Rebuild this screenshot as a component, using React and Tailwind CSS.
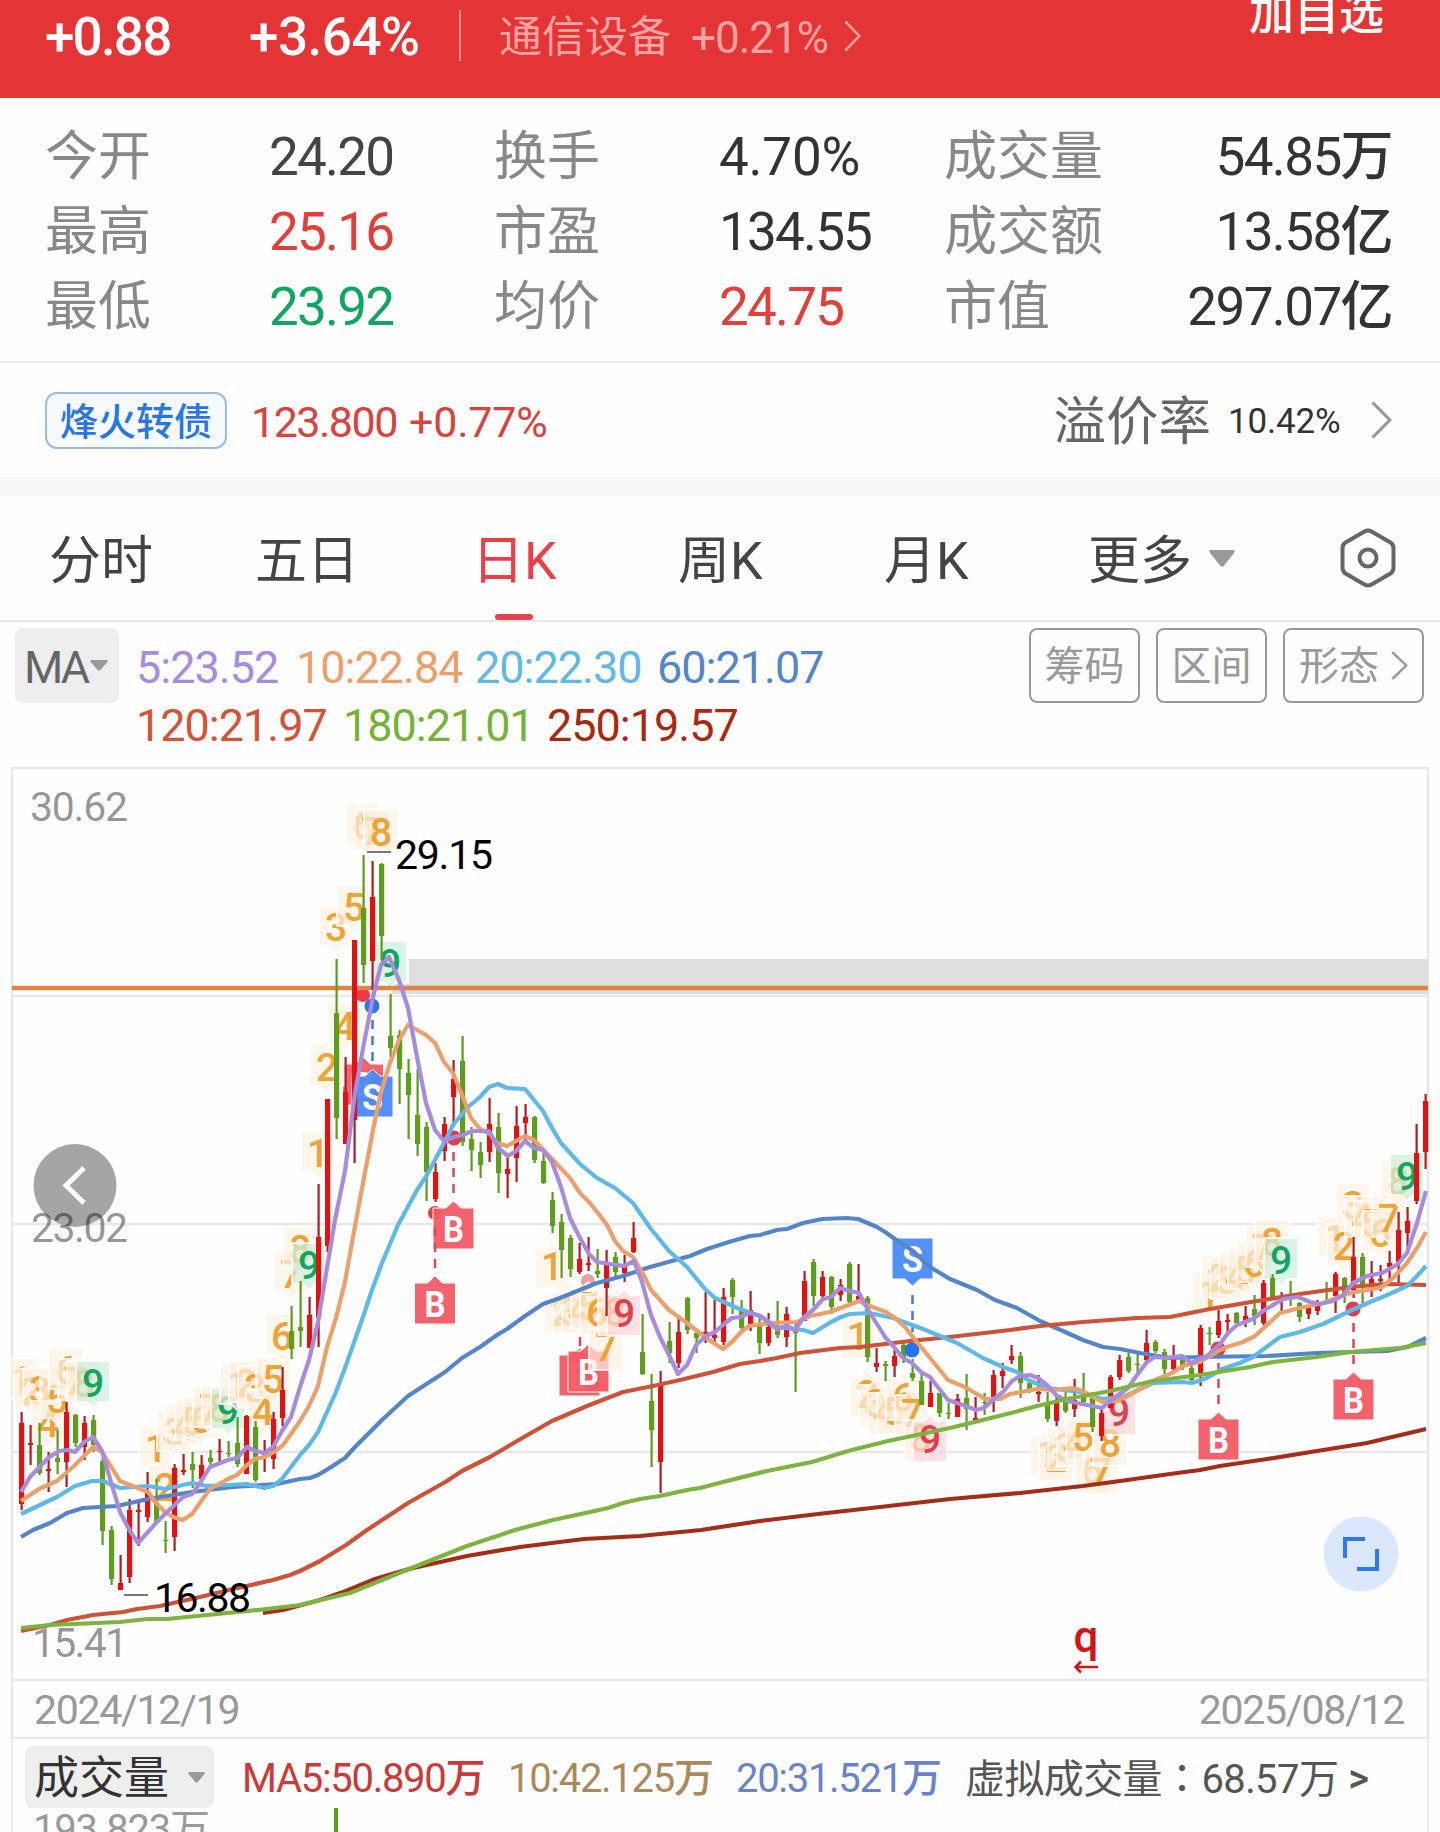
const STATS = [
  ["今开", "24.20", "text-[#444444]", "换手", "4.70%", "tracking-[-0.2px] text-[#333333]", "成交量", "54.85万"],
  ["最高", "25.16", "text-[#e0403c]", "市盈", "134.55", "tracking-[-1.8px] text-[#333333]", "成交额", "13.58亿"],
  ["最低", "23.92", "text-[#12a562]", "均价", "24.75", "tracking-[-1.8px] text-[#e0403c]", "市值", "297.07亿"],
];

// [high, body top, body bottom, low, up]
const CANDLES = [
  [1412, 1423, 1504, 1510, 1], [1425, 1443, 1445, 1465, 1], [1423, 1445, 1473, 1475, 0], [1452, 1469, 1471, 1492, 1],
  [1430, 1458, 1462, 1474, 0], [1402, 1412, 1462, 1487, 1], [1414, 1415, 1443, 1447, 0], [1416, 1423, 1447, 1460, 1],
  [1415, 1420, 1445, 1452, 0], [1458, 1461, 1531, 1545, 0], [1526, 1530, 1579, 1585, 0], [1555, 1583, 1590, 1590, 1],
  [1499, 1510, 1577, 1583, 1], [1503, 1510, 1512, 1546, 1], [1472, 1491, 1517, 1522, 1], [1479, 1503, 1521, 1523, 0],
  [1521, 1540, 1541, 1553, 0], [1464, 1468, 1537, 1551, 1], [1454, 1470, 1472, 1475, 1], [1452, 1464, 1470, 1488, 0],
  [1455, 1465, 1479, 1481, 1], [1450, 1458, 1462, 1465, 0], [1439, 1451, 1452, 1462, 1], [1441, 1453, 1454, 1457, 0],
  [1417, 1443, 1464, 1467, 0], [1415, 1416, 1474, 1474, 1], [1421, 1427, 1480, 1482, 0], [1440, 1453, 1455, 1472, 1],
  [1412, 1419, 1459, 1469, 1], [1367, 1390, 1418, 1426, 1], [1306, 1331, 1349, 1359, 0], [1281, 1327, 1331, 1347, 0],
  [1297, 1315, 1348, 1348, 1], [1184, 1237, 1318, 1347, 1], [1099, 1099, 1246, 1252, 1], [959, 1013, 1118, 1139, 0],
  [1057, 1092, 1144, 1144, 1], [940, 940, 1120, 1163, 1], [855, 908, 965, 983, 0], [861, 897, 961, 990, 1],
  [863, 864, 936, 960, 0], [994, 1036, 1048, 1057, 0], [1030, 1035, 1069, 1104, 0], [1059, 1073, 1095, 1139, 0],
  [1069, 1115, 1144, 1156, 0], [1122, 1127, 1172, 1201, 0], [1163, 1172, 1199, 1202, 1], [1117, 1124, 1151, 1161, 1],
  [1060, 1079, 1097, 1127, 1], [1036, 1061, 1142, 1146, 0], [1127, 1139, 1150, 1171, 0], [1142, 1152, 1165, 1178, 0],
  [1098, 1124, 1152, 1162, 1], [1113, 1127, 1173, 1193, 0], [1155, 1169, 1174, 1198, 1], [1106, 1126, 1158, 1182, 1],
  [1104, 1117, 1123, 1140, 1], [1116, 1117, 1160, 1163, 0], [1150, 1161, 1183, 1184, 0], [1192, 1200, 1226, 1233, 0],
  [1214, 1222, 1250, 1278, 0], [1235, 1238, 1269, 1277, 0], [1243, 1259, 1272, 1274, 1], [1237, 1263, 1265, 1271, 1],
  [1249, 1271, 1274, 1278, 0], [1250, 1262, 1288, 1316, 1], [1252, 1257, 1272, 1276, 0], [1255, 1264, 1273, 1282, 1],
  [1222, 1238, 1252, 1253, 1], [1314, 1352, 1374, 1375, 0], [1374, 1401, 1430, 1467, 0], [1371, 1383, 1462, 1493, 1],
  [1322, 1341, 1353, 1363, 0], [1316, 1332, 1363, 1368, 1], [1297, 1298, 1330, 1334, 0], [1331, 1333, 1338, 1353, 0],
  [1292, 1332, 1334, 1343, 1], [1300, 1335, 1338, 1342, 1], [1288, 1297, 1342, 1345, 1], [1278, 1280, 1297, 1314, 0],
  [1300, 1309, 1328, 1333, 0], [1291, 1310, 1325, 1331, 1], [1317, 1324, 1343, 1354, 0], [1313, 1327, 1343, 1346, 1],
  [1301, 1328, 1335, 1338, 0], [1307, 1314, 1337, 1347, 1], [1323, 1328, 1333, 1392, 0], [1271, 1281, 1321, 1321, 1],
  [1259, 1262, 1296, 1306, 0], [1271, 1277, 1296, 1301, 1], [1276, 1277, 1307, 1314, 0], [1279, 1285, 1295, 1301, 1],
  [1262, 1264, 1302, 1307, 0], [1264, 1296, 1300, 1300, 1], [1296, 1298, 1357, 1362, 0], [1348, 1363, 1367, 1372, 1],
  [1361, 1364, 1366, 1381, 0], [1350, 1356, 1366, 1377, 1], [1343, 1345, 1359, 1363, 0], [1359, 1373, 1378, 1381, 0],
  [1374, 1381, 1405, 1405, 0], [1381, 1393, 1407, 1407, 1], [1393, 1393, 1413, 1417, 0], [1403, 1413, 1414, 1419, 0],
  [1394, 1399, 1417, 1417, 1], [1374, 1398, 1409, 1430, 0], [1397, 1418, 1420, 1422, 1], [1393, 1402, 1403, 1415, 0],
  [1370, 1375, 1398, 1412, 1], [1363, 1371, 1376, 1388, 1], [1345, 1356, 1360, 1364, 1], [1352, 1356, 1383, 1398, 0],
  [1380, 1383, 1389, 1393, 0], [1375, 1392, 1394, 1402, 1], [1392, 1402, 1419, 1422, 0], [1397, 1403, 1421, 1426, 1],
  [1390, 1397, 1411, 1413, 0], [1379, 1400, 1409, 1417, 1], [1373, 1397, 1402, 1403, 0], [1392, 1398, 1427, 1432, 0],
  [1408, 1413, 1436, 1441, 1], [1375, 1377, 1408, 1408, 1], [1355, 1360, 1377, 1380, 1], [1353, 1357, 1371, 1373, 0],
  [1354, 1364, 1365, 1373, 0], [1330, 1343, 1360, 1364, 1], [1340, 1342, 1351, 1353, 0], [1349, 1352, 1369, 1374, 0],
  [1345, 1358, 1369, 1373, 1], [1358, 1360, 1365, 1370, 0], [1363, 1368, 1380, 1384, 0], [1325, 1328, 1373, 1386, 1],
  [1327, 1333, 1334, 1345, 0], [1310, 1321, 1335, 1338, 1], [1314, 1320, 1322, 1333, 1], [1312, 1313, 1323, 1325, 0],
  [1306, 1316, 1322, 1327, 1], [1295, 1309, 1316, 1325, 0], [1280, 1283, 1323, 1325, 1], [1274, 1278, 1297, 1300, 0],
  [1292, 1297, 1299, 1311, 1], [1281, 1297, 1298, 1306, 0], [1302, 1303, 1317, 1322, 0], [1307, 1308, 1314, 1319, 1],
  [1300, 1306, 1311, 1315, 1], [1282, 1291, 1292, 1302, 0], [1272, 1274, 1296, 1313, 1], [1277, 1278, 1293, 1303, 0],
  [1237, 1257, 1290, 1298, 1], [1253, 1257, 1285, 1303, 0], [1261, 1279, 1285, 1297, 1], [1265, 1279, 1281, 1291, 1],
  [1251, 1263, 1267, 1280, 1], [1212, 1230, 1262, 1284, 1], [1207, 1221, 1233, 1254, 1], [1124, 1153, 1201, 1204, 1],
  [1094, 1101, 1152, 1169, 1],
];

const LINES = [
  { color: "#5585c9", points: "21,1537 33,1530 50,1523 67,1513 83,1508 117,1506 148,1499 192,1492 233,1487 277,1484 300,1479 310,1478 318,1475 328,1469 345,1458 355,1447 382,1420 408,1396 445,1372 462,1358 480,1347 497,1335 507,1329 525,1316 543,1304 560,1298 597,1283 623,1276 650,1267 690,1256 707,1249 732,1241 750,1236 760,1235 777,1230 787,1229 803,1223 822,1219 847,1218 858,1219 877,1227 885,1232 895,1239 913,1251 930,1267 950,1279 977,1290 995,1300 1017,1308 1040,1321 1063,1331 1083,1340 1103,1347 1120,1349 1140,1353 1170,1358 1200,1357 1267,1356 1317,1353 1387,1351 1408,1347 1426,1338" },
  { color: "#cc523a", points: "21,1631 50,1625 67,1620 93,1615 123,1612 137,1609 160,1606 200,1597 233,1589 273,1580 290,1575 300,1571 320,1561 346,1545 367,1530 408,1503 447,1481 462,1471 490,1457 507,1447 517,1441 552,1421 587,1406 623,1392 653,1386 680,1380 713,1372 740,1364 760,1361 777,1358 800,1353 840,1348 860,1347 910,1341 950,1337 1010,1330 1040,1326 1083,1322 1137,1318 1170,1317 1210,1309 1257,1301 1300,1294 1350,1287 1387,1284 1426,1285" },
  { color: "#5fb8e6", points: "21,1514 57,1497 75,1486 92,1481 103,1481 120,1488 148,1486 165,1489 192,1483 207,1486 247,1484 264,1488 273,1486 282,1479 300,1455 309,1445 318,1432 336,1392 345,1368 363,1317 372,1290 382,1263 398,1225 417,1190 427,1175 444,1143 453,1125 467,1108 480,1097 489,1087 498,1084 507,1088 525,1089 543,1111 552,1128 561,1143 580,1164 597,1178 615,1188 633,1203 651,1229 669,1251 687,1267 705,1289 715,1298 737,1308 760,1316 777,1327 803,1330 813,1333 831,1322 841,1317 850,1314 870,1313 893,1318 923,1329 957,1343 983,1358 1003,1367 1017,1372 1028,1380 1047,1388 1080,1392 1102,1399 1123,1397 1153,1383 1183,1382 1192,1383 1207,1378 1222,1369 1240,1363 1253,1357 1280,1337 1300,1332 1323,1324 1350,1311 1370,1302 1385,1296 1407,1286 1417,1276 1426,1266" },
  { color: "#eba06c", points: "21,1501 39,1489 57,1481 75,1465 93,1447 102,1452 120,1481 135,1487 148,1492 156,1503 165,1512 173,1517 183,1520 192,1514 210,1489 228,1479 237,1475 247,1465 255,1459 265,1457 274,1452 283,1445 291,1434 300,1421 309,1406 318,1386 327,1347 336,1318 345,1282 353,1237 363,1183 373,1130 381,1092 390,1063 399,1040 408,1025 426,1035 435,1043 444,1062 453,1073 462,1095 471,1118 480,1129 490,1134 497,1143 507,1146 525,1136 534,1140 552,1159 570,1178 580,1193 589,1202 598,1213 607,1225 615,1241 623,1251 633,1257 642,1272 651,1290 669,1310 687,1323 705,1337 715,1344 723,1349 732,1342 741,1332 749,1326 770,1323 797,1322 810,1316 830,1312 859,1301 867,1305 886,1312 895,1318 905,1327 917,1342 948,1380 967,1388 985,1399 1000,1399 1010,1394 1037,1389 1053,1390 1073,1388 1083,1391 1093,1397 1102,1402 1117,1401 1137,1391 1155,1380 1172,1373 1183,1366 1200,1362 1220,1350 1227,1347 1243,1342 1255,1336 1280,1313 1300,1308 1323,1303 1350,1293 1373,1289 1382,1287 1393,1278 1407,1263 1417,1248 1426,1232" },
  { color: "#a78bdc", points: "21,1492 30,1477 48,1458 59,1451 67,1450 75,1452 84,1442 93,1437 102,1451 111,1482 120,1512 130,1531 138,1543 147,1533 156,1523 166,1513 183,1497 192,1494 200,1483 210,1467 228,1460 237,1458 247,1447 255,1451 265,1453 273,1447 282,1431 291,1417 300,1387 309,1360 318,1322 327,1268 335,1220 345,1171 355,1093 364,1043 373,997 381,965 389,957 399,980 408,1008 417,1057 426,1103 435,1130 444,1141 454,1137 463,1135 472,1131 489,1131 498,1148 508,1156 516,1151 525,1141 534,1148 543,1150 552,1162 561,1187 570,1218 580,1238 589,1254 597,1262 624,1266 634,1261 642,1282 651,1315 660,1337 669,1355 678,1374 687,1365 696,1345 706,1336 715,1332 724,1324 732,1318 741,1317 749,1313 760,1316 768,1322 777,1329 787,1326 795,1330 804,1317 813,1310 823,1299 831,1297 840,1288 850,1291 859,1293 867,1308 885,1337 894,1347 903,1358 912,1363 921,1372 930,1377 948,1400 966,1406 976,1410 984,1408 994,1399 1003,1392 1012,1381 1020,1376 1030,1375 1038,1378 1047,1385 1057,1396 1067,1401 1102,1408 1110,1401 1128,1388 1137,1375 1147,1362 1155,1357 1165,1358 1182,1356 1191,1363 1207,1356 1220,1344 1228,1333 1237,1325 1253,1319 1263,1311 1283,1299 1298,1297 1310,1302 1320,1304 1333,1301 1343,1295 1353,1283 1367,1276 1382,1273 1398,1264 1407,1253 1417,1223 1426,1191" },
  { color: "#a42d18", points: "263,1613 283,1610 320,1600 346,1591 375,1579 409,1569 467,1556 520,1547 584,1539 640,1536 701,1530 760,1521 818,1514 880,1507 950,1499 1020,1493 1083,1486 1120,1481 1170,1474 1200,1470 1220,1466 1267,1459 1317,1451 1367,1443 1426,1429" },
  { color: "#7db340", points: "21,1628 50,1625 120,1622 147,1619 167,1619 207,1615 267,1609 300,1605 350,1593 409,1569 467,1546 515,1530 553,1520 590,1512 608,1508 623,1503 640,1499 660,1496 687,1490 700,1488 723,1482 767,1471 812,1462 848,1451 888,1441 950,1428 1007,1414 1037,1406 1067,1399 1110,1391 1153,1381 1200,1375 1250,1367 1273,1362 1317,1357 1350,1352 1400,1348 1426,1343" },
];

// nine-turn marks: [x, y, digit, tone]
const UP_MARKS = [
  [21, 1380, 1], [31, 1391, 2], [40, 1390, 3], [48, 1423, 4], [57, 1399, 5], [66, 1370, 6], [75, 1381, 7], [84, 1383, 8], [93, 1383, 9, "green"],
  [156, 1448, 1], [165, 1487, 2], [174, 1432, 3], [183, 1426, 4], [192, 1421, 5], [201, 1419, 6], [210, 1408, 7], [219, 1408, 8], [228, 1410, 9, "green"],
  [237, 1385, 1], [246, 1383, 2], [255, 1388, 3], [263, 1411, 4], [273, 1379, 5], [282, 1336, 6], [291, 1274, 7], [300, 1249, 8], [309, 1265, 9, "green"],
  [318, 1153, 1], [327, 1067, 2], [336, 927, 3], [345, 1026, 4], [354, 907, 5], [363, 825, 6], [372, 831, 7], [381, 832, 8], [390, 963, 9, "green"],
  [1209, 1294, 1], [1218, 1278, 2], [1227, 1280, 3], [1236, 1276, 4], [1245, 1270, 5], [1254, 1263, 6], [1263, 1248, 7], [1272, 1242, 8], [1281, 1260, 9, "green"],
  [1335, 1238, 1], [1344, 1246, 2], [1353, 1205, 3], [1362, 1218, 4], [1371, 1223, 5], [1380, 1233, 6], [1389, 1218, 7], [1398, 1181, 8], [1407, 1176, 9, "green"],
];

const DOWN_MARKS = [
  [552, 1266, 1], [561, 1312, 2], [570, 1311, 3], [579, 1310, 4], [588, 1306, 5], [597, 1312, 6], [606, 1347, 7], [615, 1312, 8], [624, 1313, 9, "pink"],
  [858, 1336, 1], [867, 1394, 2], [876, 1403, 3], [885, 1411, 4], [894, 1411, 5], [903, 1397, 6], [912, 1413, 7], [921, 1438, 8], [930, 1439, 9, "pink"],
  [1047, 1454, 1], [1056, 1458, 2], [1065, 1447, 3], [1074, 1443, 4], [1083, 1437, 5], [1092, 1470, 6], [1101, 1472, 7], [1110, 1443, 8], [1119, 1412, 9, "pink"],
];

const TONES = {
  orange: { fill: "#fef1e3", text: "#eda338" },
  green: { fill: "#cdeedd", text: "#12a562" },
  pink: { fill: "#fcd5da", text: "#df3f4c" },
};

function Mark({ x, y, digit, tone = "orange", down = false }) {
  const t = TONES[tone];
  const shape = down
    ? `M${x - 17},${y - 18} h11 l6,-6 l6,6 h11 v41 h-34 z`
    : `M${x - 17},${y - 22} h34 v41 h-11 l-6,6 l-6,-6 h-11 z`;
  return (
    <g>
      <path d={shape} fill={t.fill} fillOpacity="0.7" stroke="#fff" strokeWidth="1.5" />
      <text x={x} y={y + 13.5} textAnchor="middle" fontSize="39" fontWeight="500" fill={t.text}>
        {digit}
      </text>
    </g>
  );
}

// y is the top edge of the square
function TradeTag({ x, y, side, down = false, opacity = 0.95 }) {
  const fill = side === "B" ? "#f35b67" : "#4a8cf8";
  const shape = down
    ? `M${x - 20.5},${y} h41 v41 h-13 l-7.5,7 l-7.5,-7 h-13 z`
    : `M${x - 20.5},${y} h13 l7.5,-7 l7.5,7 h13 v41 h-41 z`;
  return (
    <g opacity={opacity}>
      <path d={shape} fill={fill} stroke="#fff" strokeWidth="1" />
      <text x={x} y={y + 33.5} textAnchor="middle" fontSize="37" fontWeight="700" textLength="21" lengthAdjust="spacingAndGlyphs" fill="#fff">
        {side}
      </text>
    </g>
  );
}

function Lead({ x, from, to, color }) {
  return <line x1={x} x2={x} y1={from} y2={to} stroke={color} strokeWidth="2.5" strokeDasharray="9 7" />;
}

function Chart() {
  return (
    <svg width="1440" height="973" viewBox="0 766 1440 973" className="block" fontFamily="Roboto">
      <clipPath id="plot">
        <rect x="11" y="766" width="1418" height="973" />
      </clipPath>
      <g stroke="#e8e8e8" strokeWidth="2.5" fill="none">
        <path d="M12,1739 V768 H1428 V1739" />
        <path d="M12,996 H1428 M12,1224 H1428 M12,1452 H1428 M12,1680 H1428 M12,1738 H1428" />
      </g>
      <path d="M409,959 H1428 V994 H392 V984 H409 Z" fill="#dedede" />

      <circle cx="75" cy="1185.500" r="41.5" fill="#a5a5a5" />
      <path d="M84,1168 L66,1185.500 L84,1203" fill="none" stroke="#fff" strokeWidth="5" />

      <g fill="#000" fillOpacity="0.42" fontSize="41" fontWeight="450">
        <text x="30" y="821" textLength="98">30.62</text>
        <text x="31" y="1242" textLength="97">23.02</text>
        <text x="32" y="1656.500" textLength="96">15.41</text>
      </g>

      <circle cx="363" cy="995" r="7" fill="#ee3a44" />
      <TradeTag x={363} y={1064} side="B" />
      <Lead x={580} from={1337} to={1352} color="#d9485c" />
      <TradeTag x={579.5} y={1355} side="B" />
      <TradeTag x={588.5} y={1351} side="B" />
      <circle cx="588" cy="1281" r="7" fill="#e8a0a0" />

      <g clipPath="url(#plot)">
        {UP_MARKS.map(([x, y, digit, tone]) => (
          <Mark key={x} x={x} y={y} digit={digit} tone={tone} />
        ))}
        {DOWN_MARKS.map(([x, y, digit, tone]) => (
          <Mark key={x} x={x} y={y} digit={digit} tone={tone} down />
        ))}
      </g>

      <line x1="12" x2="1428" y1="988" y2="988" stroke="#dd8546" strokeWidth="4.500" />

      <circle cx="435" cy="1213" r="7" fill="#d9404c" />
      <TradeTag x={435} y={1283} side="B" />
      <TradeTag x={453.5} y={1208} side="B" />
      <Lead x={435} from={1227} to={1272} color="#d9485c" />
      <TradeTag x={372.5} y={1076} side="S" />
      <TradeTag x={912.5} y={1238} side="S" down />
      <TradeTag x={1218.5} y={1419} side="B" />
      <TradeTag x={1353.5} y={1379} side="B" />

      {CANDLES.map(([high, top, bottom, low, up], i) => {
        const x = 21.5 + i * 9;
        return (
          <g key={x}>
            <rect x={x - 1} y={high} width="2.200" height={low - high} fill={up ? "#ab1f23" : "#5d9a20"} />
            <rect x={x - 2.5} y={top} width="5.200" height={bottom - top} fill={up ? "#e01212" : "#5f9d1e"} />
          </g>
        );
      })}

      <Lead x={372.5} from={1020} to={1066} color="#3f7bdc" />
      <circle cx="372" cy="1006" r="7.500" fill="#2a73ee" />
      <Lead x={453.5} from={1152} to={1197} color="#d9485c" />
      <circle cx="454" cy="1138" r="7.500" fill="#df3d4d" />
      <Lead x={912.5} from={1295} to={1332} color="#3f7bdc" />
      <circle cx="912" cy="1350" r="7.500" fill="#2a73ee" />
      <Lead x={1218.5} from={1363} to={1408} color="#d9485c" />
      <circle cx="1218" cy="1349" r="7.500" fill="#df3d4d" />
      <Lead x={1353.5} from={1323} to={1368} color="#d9485c" />
      <circle cx="1353" cy="1309" r="7.500" fill="#df3d4d" />

      {LINES.map((line) => (
        <polyline key={line.color} points={line.points} fill="none" stroke={line.color} strokeWidth="4.2" strokeLinejoin="round" />
      ))}

      <g stroke="#777" strokeWidth="2">
        <path d="M367,852 H391 M124,1595 H148" />
      </g>
      <g fill="#000" fontSize="41" fontWeight="450">
        <text x="395" y="869" textLength="98">29.15</text>
        <text x="154" y="1612" textLength="97">16.88</text>
      </g>

      <text x="1086" y="1652" textAnchor="middle" fontSize="44" fontWeight="500" fill="#d0141a">q</text>
      <path d="M1098,1667 H1076 M1081,1661.500 L1075.500,1667 L1081,1672.500" fill="none" stroke="#d0141a" strokeWidth="2.500" />

      <circle cx="1361" cy="1554" r="37.500" fill="#dbe7fb" />
      <path d="M1345,1558 V1539 H1365 M1357,1569 H1377 V1549" fill="none" stroke="#2f78ee" strokeWidth="4" />
    </svg>
  );
}

function Chevron({ className }) {
  return (
    <svg viewBox="0 0 20 38" preserveAspectRatio="none" className={className} fill="none" stroke="currentColor" strokeWidth="3">
      <path d="M1.500,1.500 L18,19 L1.500,36.500" />
    </svg>
  );
}

function Caret({ className }) {
  return (
    <svg viewBox="0 0 26 17" preserveAspectRatio="none" className={className} fill="currentColor">
      <path d="M2,0 H24 Q27,0 25,3 L15,15.500 Q13,18 11,15.500 L1,3 Q-1,0 2,0 Z" />
    </svg>
  );
}

function App() {
  return (
    <div className="h-[1832px] w-[1440px] overflow-hidden bg-[#fefefe] font-['Roboto','Noto_Sans_CJK_SC',sans-serif] whitespace-nowrap">
      <header className="flex h-[98px] bg-[#e43536] pl-[45px] text-white">
        <div className="flex h-[75px] items-center">
          <span className="w-[204px] text-[53px] font-medium tracking-[-1.8px]">+0.88</span>
          <span className="w-[210px] text-[53px] font-medium tracking-[-0.5px]">+3.64%</span>
          <span className="-mt-1 h-[51px] w-[2px] bg-[#f08a8a]" />
          <span className="ml-[38px] w-[192px] text-[43px] text-[#f9a3a3]">通信设备</span>
          <span className="w-[153px] text-[44px] font-[450] tracking-[-1px] text-[#f9a3a3]">+0.21%</span>
          <Chevron className="-mt-1 h-[32px] w-[17px] text-[#f9a3a3]" />
        </div>
        <span className="ml-auto h-[30px] pr-[56px] text-[45px] leading-[30px] font-medium">加自选</span>
      </header>

      <section className="h-[265px] border-b-2 border-[#ebebeb] pt-[20px]">
        {STATS.map(([l1, v1, c1, l2, v2, c2, l3, v3]) => (
          <div key={l1} className="grid h-[75px] grid-cols-[224px_225px_225px_225px_1fr] items-center pr-[48px] pl-[45px] text-[53px]">
            <span className="text-[#888888]">{l1}</span>
            <span className={`font-[450] tracking-[-1.8px] ${c1}`}>{v1}</span>
            <span className="text-[#888888]">{l2}</span>
            <span className={`font-[450] ${c2}`}>{v2}</span>
            <span className="flex items-center justify-between">
              <span className="text-[#888888]">{l3}</span>
              <span className="font-[450] tracking-[-1.6px] text-[#333333]">{v3}</span>
            </span>
          </div>
        ))}
      </section>

      <section className="flex h-[114px] items-center pr-[48px] pl-[45px]">
        <span className="flex h-[57px] w-[182px] items-center justify-center rounded-xl border-2 border-[#9cbbe3] bg-[#f5faff] pt-[4px] text-[38px] font-medium text-[#2b74e4]">
          烽火转债
        </span>
        <span className="ml-[24px] w-[158px] pt-[4px] text-[43px] font-[450] tracking-[-1.5px] text-[#d9423f]">123.800</span>
        <span className="pt-[4px] text-[43px] font-[450] tracking-[-0.2px] text-[#d9423f]">+0.77%</span>
        <span className="ml-auto pt-[4px] text-[52.5px] text-[#666666]">溢价率</span>
        <span className="ml-[17px] w-[143px] pt-[4px] text-[35px] font-[450] tracking-[-0.2px] text-[#333333]">10.42%</span>
        <Chevron className="h-[38px] w-[21px] text-[#999999]" />
      </section>
      <div className="h-[19px] bg-[#f7f7f7]" />

      <nav className="flex h-[126px] items-center border-b-2 border-[#e6e6e6] pl-[49px] text-[52px] text-[#444444]">
        <span className="w-[206px] pt-[7px]">分时</span>
        <span className="w-[217px] pt-[7px]">五日</span>
        <span className="relative flex h-full w-[206px] items-center pt-[7px] text-[#ea3f49]">
          日K
          <span className="absolute bottom-0 left-[23px] h-[6px] w-[38px] rounded-full bg-[#e2434f]" />
        </span>
        <span className="w-[206px] pt-[7px]">周K</span>
        <span className="w-[204px] pt-[7px]">月K</span>
        <span className="pt-[7px]">更多</span>
        <Caret className="ml-[17px] h-[17px] w-[26px] text-[#999999]" />
        <svg viewBox="0 0 56 60" className="ml-[105px] h-[60px] w-[56px]" fill="none" stroke="#666" strokeWidth="4">
          <path d="M24.500,3.500 Q28,1.500 31.500,3.500 L50.500,14.500 Q53.500,16.500 53.500,20 V40 Q53.500,43.500 50.500,45.500 L31.500,56.500 Q28,58.500 24.500,56.500 L5.500,45.500 Q2.500,43.500 2.500,40 V20 Q2.500,16.500 5.500,14.500 Z" />
          <circle cx="28" cy="30" r="8.500" />
        </svg>
      </nav>

      <section className="flex h-[144px] pt-[6px] pl-[15px] text-[45px]">
        <div className="flex h-[75px] w-[104px] items-center rounded-lg bg-[#eeeeee] pl-[9px] text-[#666666]">
          <span className="w-[66px] pt-[4px] font-[450] tracking-[-3px]">MA</span>
          <Caret className="h-[11px] w-[18px] text-[#999999]" />
        </div>
        <div className="ml-[17px] pt-[2px] font-[450] tracking-[-1px]">
          <div className="flex h-[76px] items-center">
            <span className="w-[160px] text-[#a78bdc]">5:23.52</span>
            <span className="w-[179px] text-[#eba06c]">10:22.84</span>
            <span className="w-[182px] text-[#5fb8e6]">20:22.30</span>
            <span className="text-[#5585c9]">60:21.07</span>
          </div>
          <div className="flex h-[40px] items-center">
            <span className="w-[207px] text-[#d2533a]">120:21.97</span>
            <span className="w-[204px] text-[#76b23a]">180:21.01</span>
            <span className="text-[#a82812]">250:19.57</span>
          </div>
        </div>
        <div className="mr-[16px] ml-auto flex gap-[16px] text-[40px] text-[#999999]">
          <span className="flex h-[75px] w-[111px] items-center justify-center rounded-lg border-2 border-[#999999] pt-[3px]">筹码</span>
          <span className="flex h-[75px] w-[111px] items-center justify-center rounded-lg border-2 border-[#999999] pt-[3px]">区间</span>
          <span className="flex h-[75px] w-[141px] items-center justify-center gap-[12px] rounded-lg border-2 border-[#999999]">
            <span className="pt-[3px]">形态</span>
            <Chevron className="h-[29px] w-[17px]" />
          </span>
        </div>
      </section>

      <Chart />

      {/* dates sit on the axis band at the bottom of the chart */}
      <div className="relative -mt-[58px] flex h-[58px] items-center justify-between pt-[2px] pr-[36px] pl-[34px] text-[41px] font-[450] tracking-[-1.3px] text-[#999999]">
        <span>2024/12/19</span>
        <span>2025/08/12</span>
      </div>

      <section className="mx-[11px] h-[93px] border-x-2 border-[#ebebeb] pt-[7px]">
        <div className="flex h-[62px] items-center pl-[12px] text-[40px] tracking-[-1.3px]">
          <div className="flex h-[62px] w-[189px] items-center rounded-lg bg-[#eeeeee] pl-[9px] text-[45px] tracking-normal text-[#333333]">
            <span className="pt-[4px]">成交量</span>
            <Caret className="ml-[19px] h-[11px] w-[17px] text-[#999999]" />
          </div>
          <span className="ml-[28px] w-[266px] pt-[3px] font-[450] text-[#cb3a38]">MA5:50.890万</span>
          <span className="w-[228px] pt-[3px] font-[450] text-[#a98a5b]">10:42.125万</span>
          <span className="w-[229px] pt-[3px] font-[450] text-[#6a83c8]">20:31.521万</span>
          <span className="pt-[2px] tracking-[-0.6px] text-[#555555]">
            虚拟成交量
            <span className="font-['Noto_Sans_CJK_TC',sans-serif]">：</span>
            68.57万
          </span>
          <span className="ml-[10px] pt-[3px] font-medium text-[#555555]">&gt;</span>
        </div>
        <div className="flex">
          <span className="ml-[20px] h-[24px] w-[301px] text-[40px] leading-[43px] tracking-[-1.2px] text-[#999999]">193.823万</span>
          <span className="h-[24px] w-[4px] bg-[#5f9d1e]" />
        </div>
      </section>
    </div>
  );
}

export default App;
